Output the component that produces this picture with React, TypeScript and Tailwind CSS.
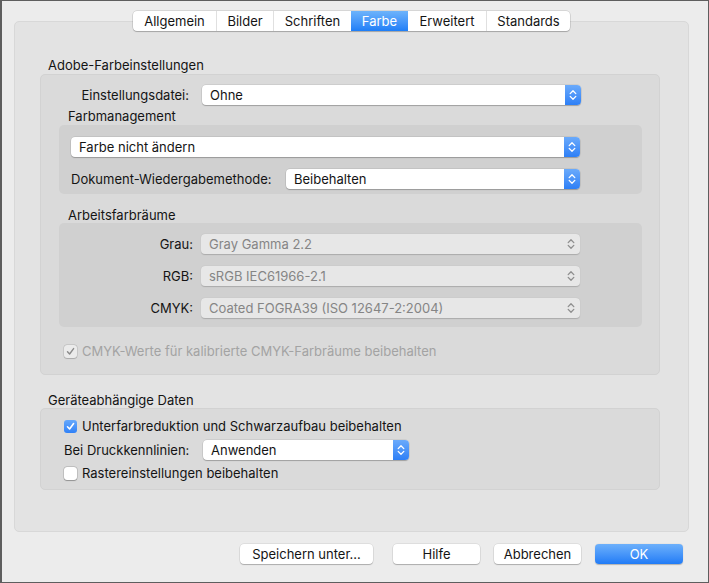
import type { ReactNode } from "react";

const tabs = [
  { label: "Allgemein", w: "w-[83px]" },
  { label: "Bilder", w: "w-[57px]" },
  { label: "Schriften", w: "w-[78px]" },
  { label: "Farbe", w: "w-[57px]", active: true },
  { label: "Erweitert", w: "w-[78px]" },
  { label: "Standards", w: "w-[84px]" },
];

function Chevrons({ color }: { color: string }) {
  return (
    <svg width="8" height="12" viewBox="0 0 8 12" fill="none">
      <path d="M1.2 4.6 L4 1.8 L6.8 4.6" stroke={color} strokeWidth="1.3" strokeLinecap="round" strokeLinejoin="round" />
      <path d="M1.2 7.4 L4 10.2 L6.8 7.4" stroke={color} strokeWidth="1.3" strokeLinecap="round" strokeLinejoin="round" />
    </svg>
  );
}

function Popup({ value, w, disabled }: { value: string; w: string; disabled?: boolean }) {
  if (disabled) {
    return (
      <div className={`${w} flex h-[20px] items-center rounded-[4px] bg-[#e7e7e7] shadow-[0_0.5px_1px_rgba(0,0,0,0.18)]`}>
        <span className="flex-1 pl-[8px] text-[#858585]">{value}</span>
        <span className="flex w-[16px] justify-center pr-[2px]">
          <Chevrons color="#8e8e8e" />
        </span>
      </div>
    );
  }
  return (
    <div className={`${w} flex h-[20px] items-center rounded-[4px] bg-white shadow-[0_0_0_0.5px_rgba(0,0,0,0.12),0_1px_1px_rgba(0,0,0,0.22)]`}>
      <span className="flex-1 pl-[8px]">{value}</span>
      <span className="flex h-[20px] w-[16px] items-center justify-center rounded-r-[4px] bg-linear-to-b from-[#6aaafb] to-[#2d7ff6]">
        <Chevrons color="#ffffff" />
      </span>
    </div>
  );
}

function Checkbox({ state }: { state: "checked" | "unchecked" | "disabled" }) {
  if (state === "checked") {
    return (
      <span className="flex h-[13px] w-[13px] items-center justify-center rounded-[3px] bg-linear-to-b from-[#66a8fb] to-[#2f81f7]">
        <svg width="9" height="9" viewBox="0 0 9 9" fill="none">
          <path d="M1.5 4.8 L3.6 7 L7.6 1.6" stroke="#fff" strokeWidth="1.6" strokeLinecap="round" strokeLinejoin="round" />
        </svg>
      </span>
    );
  }
  if (state === "disabled") {
    return (
      <span className="flex h-[13px] w-[13px] items-center justify-center rounded-[3px] bg-[#ebebeb] shadow-[0_0_0_0.5px_rgba(0,0,0,0.15),0_0.5px_1px_rgba(0,0,0,0.15)]">
        <svg width="9" height="9" viewBox="0 0 9 9" fill="none">
          <path d="M1.5 4.8 L3.6 7 L7.6 1.6" stroke="#8a8a8a" strokeWidth="1.4" strokeLinecap="round" strokeLinejoin="round" />
        </svg>
      </span>
    );
  }
  return (
    <span className="h-[13px] w-[13px] rounded-[3px] bg-white shadow-[0_0_0_0.5px_rgba(0,0,0,0.2),0_0.5px_1px_rgba(0,0,0,0.25)]" />
  );
}

function Button({ children, w, primary }: { children: ReactNode; w: string; primary?: boolean }) {
  return primary ? (
    <button className={`${w} flex h-[20px] items-center justify-center rounded-[4px] bg-linear-to-b from-[#6cb0fb] to-[#1f7bf6] text-white shadow-[0_0.5px_1px_rgba(0,0,0,0.25)]`}>
      {children}
    </button>
  ) : (
    <button className={`${w} flex h-[20px] items-center justify-center rounded-[4px] bg-white shadow-[0_0_0_0.5px_rgba(0,0,0,0.12),0_1px_1px_rgba(0,0,0,0.22)]`}>
      {children}
    </button>
  );
}

function GroupTitle({ children, className }: { children: ReactNode; className: string }) {
  return <div className={`h-[16px] leading-[16px] ${className}`}>{children}</div>;
}

export default function App() {
  return (
    <div
      className="box-border flex h-[583px] w-[709px] flex-col border border-l-2 border-[#5e5e5e] bg-[#ececec] text-[13px] leading-[16px] text-[#141414]"
      style={{ fontFamily: "Inter, 'Noto Sans', sans-serif" }}
    >
      {/* Tabs */}
      <div className="relative z-10 ml-[12px] mt-[10px] flex w-[675px] justify-center">
        <div className="flex h-[20px] overflow-hidden rounded-[4px] bg-white shadow-[0_0_0_0.5px_rgba(0,0,0,0.18),0_1px_1px_rgba(0,0,0,0.2)]">
          {tabs.map((t, i) => (
            <div
              key={t.label}
              className={`${t.w} flex items-center justify-center ${
                t.active
                  ? "bg-linear-to-b from-[#6db3fb] to-[#1e7ef7] text-white"
                  : i > 0 && !tabs[i - 1].active
                    ? "border-l border-[#e0e0e0]"
                    : ""
              }`}
            >
              {t.label}
            </div>
          ))}
        </div>
      </div>

      {/* Panel */}
      <div className="-mt-[10px] ml-[12px] flex h-[511px] w-[675px] flex-col rounded-[5px] border border-[#d8d8d8] bg-[#e3e3e3] pl-[25px] pt-[35px]">
        <GroupTitle className="pl-[8px]">Adobe-Farbeinstellungen</GroupTitle>
        <div className="mt-[1px] flex w-[620px] flex-col rounded-[5px] border border-[#d2d2d2] bg-[#dadada] pt-[10px] pb-[15px]">
          <div className="flex items-center">
            <div className="w-[148px] text-right">Einstellungsdatei:</div>
            <div className="ml-[13px]">
              <Popup value="Ohne" w="w-[379px]" />
            </div>
          </div>

          <GroupTitle className="mt-[3px] pl-[27px]">Farbmanagement</GroupTitle>
          <div className="ml-[18px] mt-[1px] flex w-[583px] flex-col gap-[12px] rounded-[5px] bg-[#d0d0d0] pl-[12px] pt-[12px] pb-[5px]">
            <Popup value="Farbe nicht ändern" w="w-[509px]" />
            <div className="flex items-center">
              <div className="w-[215px]">Dokument-Wiedergabemethode:</div>
              <Popup value="Beibehalten" w="w-[294px]" />
            </div>
          </div>

          <GroupTitle className="mt-[13px] pl-[27px]">Arbeitsfarbräume</GroupTitle>
          <div className="ml-[18px] flex w-[583px] flex-col gap-[12px] rounded-[5px] bg-[#d0d0d0] pt-[11px] pb-[9px]">
            {[
              ["Grau:", "Gray Gamma 2.2"],
              ["RGB:", "sRGB IEC61966-2.1"],
              ["CMYK:", "Coated FOGRA39 (ISO 12647-2:2004)"],
            ].map(([l, v]) => (
              <div key={l} className="flex items-center">
                <div className="w-[134px] text-right">{l}</div>
                <div className="ml-[8px]">
                  <Popup value={v} w="w-[379px]" disabled />
                </div>
              </div>
            ))}
          </div>

          <div className="mt-[16px] flex items-center pl-[23px]">
            <Checkbox state="disabled" />
            <span className="ml-[5px] text-[#a3a3a3]">CMYK-Werte für kalibrierte CMYK-Farbräume beibehalten</span>
          </div>
        </div>

        <GroupTitle className="mt-[17px] pl-[8px]">Geräteabhängige Daten</GroupTitle>
        <div className="flex w-[620px] flex-col rounded-[5px] border border-[#d2d2d2] bg-[#dadada] pl-[23px] pt-[9px] pb-[8px]">
          <div className="flex items-center">
            <Checkbox state="checked" />
            <span className="ml-[5px]">Unterfarbreduktion und Schwarzaufbau beibehalten</span>
          </div>
          <div className="mt-[6px] flex items-center">
            <div className="w-[139px]">Bei Druckkennlinien:</div>
            <Popup value="Anwenden" w="w-[206px]" />
          </div>
          <div className="mt-[5px] flex items-center">
            <Checkbox state="unchecked" />
            <span className="ml-[5px]">Rastereinstellungen beibehalten</span>
          </div>
        </div>
      </div>

      {/* Buttons */}
      <div className="mt-[12px] flex pl-[238px]">
        <Button w="w-[133px]">Speichern unter...</Button>
        <div className="ml-[20px]">
          <Button w="w-[87px]">Hilfe</Button>
        </div>
        <div className="ml-[14px]">
          <Button w="w-[87px]">Abbrechen</Button>
        </div>
        <div className="ml-[14px]">
          <Button w="w-[88px]" primary>
            OK
          </Button>
        </div>
      </div>
    </div>
  );
}
